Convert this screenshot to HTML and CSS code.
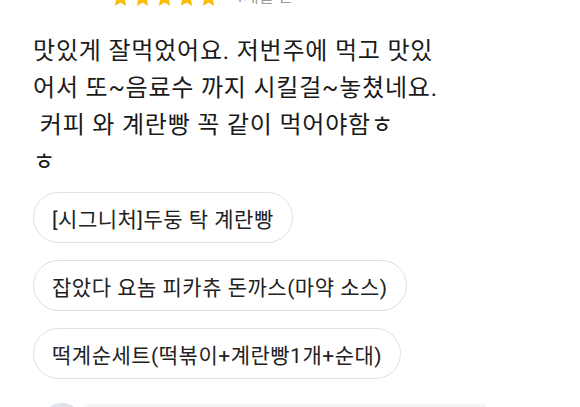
FILE: index.html
```html
<!DOCTYPE html>
<html lang="ko">
<head>
<meta charset="utf-8">
<link rel="stylesheet" href="styles.css">
</head>
<body>
<div class="review">
  <div class="meta">
    <div class="stars">
      <svg class="star" viewBox="0 0 24 24"><path d="M12 1.5l3.1 6.9 7.4.8-5.6 5 1.6 7.4L12 17.8l-6.5 3.8 1.6-7.4-5.6-5 7.4-.8z"/></svg>
      <svg class="star" viewBox="0 0 24 24"><path d="M12 1.5l3.1 6.9 7.4.8-5.6 5 1.6 7.4L12 17.8l-6.5 3.8 1.6-7.4-5.6-5 7.4-.8z"/></svg>
      <svg class="star" viewBox="0 0 24 24"><path d="M12 1.5l3.1 6.9 7.4.8-5.6 5 1.6 7.4L12 17.8l-6.5 3.8 1.6-7.4-5.6-5 7.4-.8z"/></svg>
      <svg class="star" viewBox="0 0 24 24"><path d="M12 1.5l3.1 6.9 7.4.8-5.6 5 1.6 7.4L12 17.8l-6.5 3.8 1.6-7.4-5.6-5 7.4-.8z"/></svg>
      <svg class="star" viewBox="0 0 24 24"><path d="M12 1.5l3.1 6.9 7.4.8-5.6 5 1.6 7.4L12 17.8l-6.5 3.8 1.6-7.4-5.6-5 7.4-.8z"/></svg>
    </div>
    <span class="date">1개월 전</span>
  </div>
  <p class="body">맛있게 잘먹었어요. 저번주에 먹고 맛있<br>어서 또~음료수 까지 시킬걸~놓쳤네요.<br>&nbsp;커피 와 계란빵 꼭 같이 먹어야함ㅎ<br>ㅎ</p>
  <ul class="menus">
    <li class="chip">[시그니처]두둥 탁 계란빵</li>
    <li class="chip">잡았다 요놈 피카츄 돈까스(마약 소스)</li>
    <li class="chip">떡계순세트(떡볶이+계란빵1개+순대)</li>
  </ul>
  <div class="reply">
    <div class="avatar"></div>
    <div class="bubble"></div>
  </div>
</div>
</body>
</html>
```
FILE: styles.css
```css
html, body {
  margin: 0;
  padding: 0;
  background: #ffffff;
}
body {
  font-family: Roboto, "Noto Sans CJK KR", sans-serif;
  color: #1a1a1a;
  overflow: hidden;
  height: 407px;
}
.review {
  padding-left: 33px;
}
.meta {
  display: flex;
  align-items: center;
  gap: 16px;
  margin-top: -14px;
  padding-left: 77px;
  height: 22px;
}
.stars {
  display: flex;
  gap: 1px;
}
.star {
  width: 21px;
  height: 21px;
  fill: #fbbc04;
}
.date {
  font-size: 16px;
  color: #9a9a9a;
  line-height: 22px;
}
.body {
  margin: 0;
  margin-top: 25px;
  font-size: 24px;
  line-height: 37px;
  letter-spacing: 0.8px;
}
.menus {
  list-style: none;
  margin: 11px 0 0;
  padding: 0;
  display: flex;
  flex-direction: column;
  align-items: flex-start;
  gap: 17px;
}
.chip {
  box-sizing: border-box;
  height: 51px;
  display: flex;
  align-items: center;
  padding: 0 18px;
  border: 1.5px solid #e0e0e0;
  border-radius: 26px;
  font-size: 21px;
  letter-spacing: 0.5px;
  color: #222;
}
.reply {
  display: flex;
  align-items: flex-start;
  gap: 2px;
  margin-top: 24px;
  padding-left: 9px;
}
.avatar {
  width: 40px;
  height: 40px;
  border-radius: 50%;
  background: #dfe3ea;
}
.bubble {
  width: 402px;
  height: 60px;
  background: #f4f4f5;
  border-radius: 4px;
  margin-top: 1px;
}
```
